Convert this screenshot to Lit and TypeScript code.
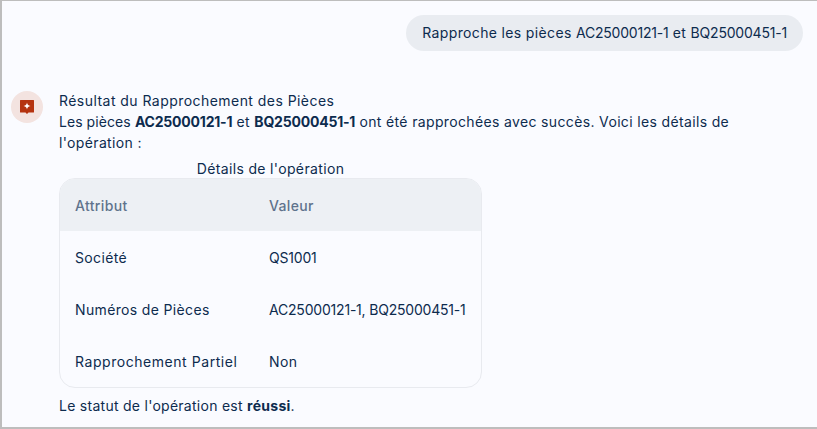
import { LitElement, html, css } from 'lit';
import { customElement } from 'lit/decorators.js';

const code = (s: string) => html`<span class="code">${s}</span>`;

const rows = [
  ['Société', code('QS1001')],
  ['Numéros de Pièces', code('AC25000121-1, BQ25000451-1')],
  [html`<span class="wide">Rapprochement Partiel</span>`, 'Non'],
];

@customElement('app-root')
export class AppRoot extends LitElement {
  static styles = css`
    :host {
      display: block;
      box-sizing: border-box;
      height: 429px;
      overflow: hidden;
      background: #fafbff;
      border: solid #bdbdbd;
      border-width: 1px 0 2px 2px;
      color: #0d2b4e;
      font-family: Inter, "Liberation Sans", sans-serif;
      font-size: 14px;
      line-height: 21px;
      letter-spacing: 0.35px;
    }
    .code {
      letter-spacing: -0.2px;
    }
    .wide {
      letter-spacing: 0.55px;
    }
    .user {
      display: flex;
      justify-content: flex-end;
      padding: 14px 14px 0 0;
    }
    .bubble {
      height: 36px;
      line-height: 36px;
      padding: 0 16px;
      border-radius: 18px;
      background: #e9ecf1;
    }
    .reply {
      display: flex;
      gap: 16px;
      padding: 40px 0 0 9px;
    }
    .avatar {
      flex: none;
      width: 32px;
      height: 32px;
      border-radius: 50%;
      background: #f3e3e0;
      display: flex;
      align-items: center;
      justify-content: center;
    }
    .body {
      width: 680px;
      margin-top: -1px;
    }
    .title {
      letter-spacing: 0.45px;
    }
    .lead {
      letter-spacing: 0.05px;
    }
    b {
      font-weight: 700;
    }
    .caption {
      width: 423px;
      text-align: center;
      padding-top: 7px;
      line-height: 18px;
    }
    .table {
      width: 423px;
      box-sizing: border-box;
      border: 1px solid #e8eaef;
      border-radius: 16px;
      overflow: hidden;
      margin-bottom: 7px;
    }
    .row {
      display: grid;
      grid-template-columns: 194px 1fr;
      height: 52px;
      align-items: center;
      padding-left: 15px;
    }
    .head {
      background: #edf0f4;
      color: #5f738c;
      font-weight: 500;
    }
    .foot {
      letter-spacing: 0.27px;
    }
  `;

  render() {
    return html`
      <div class="user"><div class="bubble">Rapproche les pièces ${code('AC25000121-1')} et ${code('BQ25000451-1')}</div></div>
      <div class="reply">
        <div class="avatar">
          <svg width="14" height="14" viewBox="0 0 14 14">
            <path fill="#b5330f" d="M.5 0h13a.5.5 0 0 1 .5.5v11.500a.5.5 0 0 1-.5.5H8.500L7 14l-1.500-1.500H.5A.5.5 0 0 1 0 12V.5A.5.5 0 0 1 .5 0z" />
            <path fill="#fff" d="M7 2.500c.3 1.900 1 2.800 3.500 3.500C8 6.700 7.300 7.600 7 9.500 6.700 7.600 6 6.700 3.500 6 6 5.300 6.700 4.400 7 2.500z" />
          </svg>
        </div>
        <div class="body">
          <div class="title">Résultat du Rapprochement des Pièces</div>
          <div><span class="lead">Les pièces</span> <b>${code('AC25000121-1')}</b> et <b>${code('BQ25000451-1')}</b> ont été rapprochées avec succès. Voici les détails de l'opération :</div>
          <div class="caption">Détails de l'opération</div>
          <div class="table">
            <div class="row head"><span>Attribut</span><span>Valeur</span></div>
            ${rows.map((r) => html`<div class="row"><span>${r[0]}</span><span>${r[1]}</span></div>`)}
          </div>
          <div class="foot">Le statut de l'opération est <b>réussi</b>.</div>
        </div>
      </div>
    `;
  }
}
